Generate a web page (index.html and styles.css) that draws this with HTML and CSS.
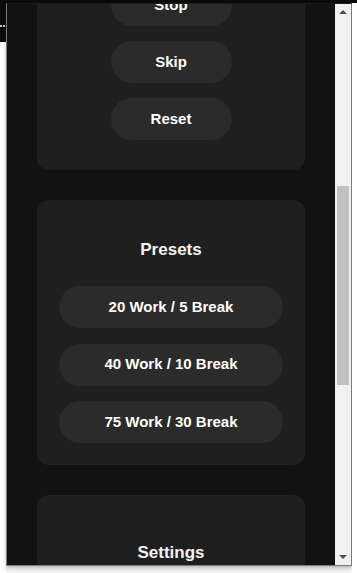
FILE: index.html
```html
<!DOCTYPE html>
<html>
<head>
<meta charset="utf-8">
<link rel="stylesheet" href="styles.css">
</head>
<body>
<div class="topbar"></div>
<div class="row">
  <div class="leftstrip">
    <div class="leftdark"><span class="dot"></span><span class="dot"></span></div>
  </div>
  <div class="popup">
    <div class="viewport">
      <div class="content">
        <section class="card controls">
          <button class="btn small">Start</button>
          <button class="btn small">Stop</button>
          <button class="btn small">Skip</button>
          <button class="btn small">Reset</button>
        </section>
        <section class="card presets">
          <h2 class="title">Presets</h2>
          <div class="list">
            <button class="btn wide">20 Work / 5 Break</button>
            <button class="btn wide">40 Work / 10 Break</button>
            <button class="btn wide">75 Work / 30 Break</button>
          </div>
        </section>
        <section class="card settings">
          <h2 class="title">Settings</h2>
          <div class="list">
            <button class="btn wide">Work</button>
          </div>
        </section>
      </div>
    </div>
    <div class="scrollbar">
      <div class="arrow"><span class="tri up"></span></div>
      <div class="track"><div class="thumb"></div></div>
      <div class="arrow"><span class="tri down"></span></div>
    </div>
  </div>
  <div class="rightstrip"></div>
</div>
</body>
</html>
```
FILE: styles.css
```css
html, body {
  margin: 0;
  padding: 0;
  width: 357px;
  height: 573px;
  overflow: hidden;
  background: #f4f4f4;
  font-family: "Liberation Sans", Arial, sans-serif;
}
.topbar {
  height: 3px;
  background: #0b0b0b;
}
.row {
  display: flex;
  align-items: flex-start;
}
.leftstrip {
  width: 6px;
  height: 570px;
  background: #ffffff;
}
.leftdark {
  height: 39px;
  background: #0b0b0b;
  display: flex;
  gap: 1px;
  padding-top: 22px;
  box-sizing: border-box;
  align-items: flex-start;
}
.dot {
  width: 2px;
  height: 2px;
  background: #cfcfcf;
}
.popup {
  width: 344px;
  height: 561px;
  border: 1px solid #7a7a7a;
  border-top-color: #1a1a1a;
  display: flex;
  box-shadow: 0 2px 4px rgba(0,0,0,0.25);
}
.rightstrip {
  width: 5px;
  height: 570px;
  background: #ffffff;
}
.viewport {
  width: 328px;
  height: 561px;
  overflow: hidden;
  background: #121212;
}
.content {
  margin-top: -107px;
  padding: 0 30px;
  display: flex;
  flex-direction: column;
  gap: 30px;
}
.card {
  background: #1f1f1f;
  border-radius: 12px;
  display: flex;
  flex-direction: column;
  align-items: center;
}
.controls {
  padding: 30px 0;
  gap: 15px;
}
.presets {
  padding: 39px 22px 22px;
}
.settings {
  padding: 47px 22px 22px;
}
.title {
  margin: 0 0 26px;
  font-size: 17px;
  line-height: 21px;
  font-weight: bold;
  color: #f2f2f2;
}
.list {
  display: flex;
  flex-direction: column;
  gap: 15.5px;
  width: 100%;
}
.btn {
  border: none;
  background: #2b2b2b;
  color: #ffffff;
  font-family: "Liberation Sans", Arial, sans-serif;
  font-size: 15px;
  font-weight: bold;
  height: 42px;
  border-radius: 21px;
  padding: 0 0 2px;
}
.small {
  width: 121px;
}
.wide {
  width: 100%;
}
.scrollbar {
  width: 16px;
  height: 561px;
  background: #f1f1f1;
  display: flex;
  flex-direction: column;
}
.arrow {
  height: 16px;
  display: flex;
  align-items: center;
  justify-content: center;
}
.tri {
  width: 0;
  height: 0;
  border-left: 4px solid transparent;
  border-right: 4px solid transparent;
}
.tri.up {
  border-bottom: 4px solid #505050;
}
.tri.down {
  border-top: 4px solid #505050;
}
.track {
  flex: 1;
  padding: 166px 2px 0;
}
.thumb {
  height: 199px;
  background: #c1c1c1;
}
```
